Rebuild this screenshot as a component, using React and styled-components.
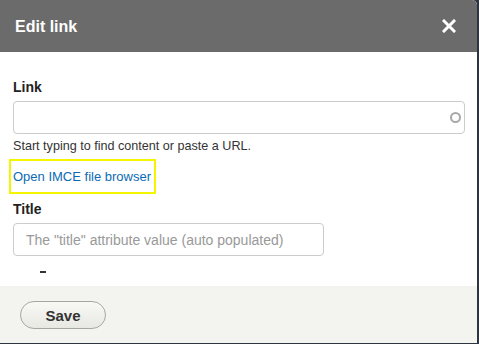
import React from 'react'
import styled, { createGlobalStyle } from 'styled-components'

const Global = createGlobalStyle`
  html, body {
    margin: 0;
    padding: 0;
    background: #2f3540;
    font-family: "Liberation Sans", Arial, sans-serif;
  }
`

const Dialog = styled.div`
  width: 477px;
  height: 343px;
  background: #fff;
  border-radius: 0 5px 0 0;
  overflow: hidden;
  display: flex;
  flex-direction: column;
`

const Header = styled.div`
  height: 52px;
  flex: none;
  background: #6b6b6b;
  display: flex;
  align-items: center;
  justify-content: space-between;
  padding: 0 21px 0 15px;
  box-sizing: border-box;
`

const Title = styled.h1`
  margin: 0;
  color: #fff;
  font-size: 16px;
  font-weight: bold;
  line-height: 20px;
  padding-top: 2px;
`

const Close = styled.button`
  border: 0;
  background: none;
  padding: 0;
  width: 14px;
  height: 14px;
  display: flex;
  cursor: pointer;
`

const Body = styled.div`
  height: 234px;
  flex: none;
  overflow: hidden;
  padding: 26px 12px 0 13px;
  box-sizing: border-box;
`

const Label = styled.label`
  display: block;
  font-size: 14px;
  font-weight: bold;
  line-height: 18px;
  color: #222;
  margin-top: ${(p) => p.$top || 0}px;
`

const InputWrap = styled.div`
  position: relative;
  width: ${(p) => p.$width}px;
  margin-top: 5px;
`

const Input = styled.input`
  display: block;
  width: 100%;
  height: 33px;
  box-sizing: border-box;
  border: 1px solid #ccc;
  border-radius: 4px;
  padding: 0 12px;
  font-family: inherit;
  font-size: 14px;
  color: #333;
  outline: none;

  &::placeholder {
    color: #999;
  }
`

const Throbber = styled.span`
  position: absolute;
  right: 4px;
  top: 11px;
  width: 7px;
  height: 7px;
  border: 2px solid #a8a8a8;
  border-radius: 50%;
`

const Description = styled.div`
  font-size: 12.6px;
  line-height: 16px;
  color: #333;
  margin-top: 4px;
`

const Highlight = styled.div`
  display: flex;
  width: fit-content;
  margin: 5px 0 0 -4px;
  padding: 8px 3px 8px 2px;
  border: 2px solid #f5f500;
`

const BrowseLink = styled.a`
  font-size: 13px;
  line-height: 15px;
  color: #0b6ab3;
  text-decoration: none;
`

const Hint = styled.div`
  margin: 15px 0 0 27px;
  width: 6px;
  height: 2px;
  background: #333;
`

const Footer = styled.div`
  flex: 1;
  background: #f3f3ef;
  padding: 15px 20px;
  box-sizing: border-box;
`

const Button = styled.button`
  width: 86px;
  height: 28px;
  border: 1px solid #a6a6a6;
  border-radius: 14px;
  background: linear-gradient(#f8f8f5, #e8e8e3);
  font-family: inherit;
  font-size: 15px;
  font-weight: bold;
  color: #333;
  cursor: pointer;
`

export default function App() {
  return (
    <>
      <Global />
      <Dialog>
        <Header>
          <Title>Edit link</Title>
          <Close aria-label="Close">
            <svg width="14" height="14" viewBox="0 0 14 14">
              <path d="M2 2 L12 12 M12 2 L2 12" stroke="#fff" strokeWidth="3" strokeLinecap="square" />
            </svg>
          </Close>
        </Header>
        <Body>
          <Label>Link</Label>
          <InputWrap $width={452}>
            <Input type="text" />
            <Throbber />
          </InputWrap>
          <Description>Start typing to find content or paste a URL.</Description>
          <Highlight>
            <BrowseLink href="#">Open IMCE file browser</BrowseLink>
          </Highlight>
          <Label $top={6}>Title</Label>
          <InputWrap $width={311}>
            <Input type="text" placeholder={'The "title" attribute value (auto populated)'} />
          </InputWrap>
          <Hint />
        </Body>
        <Footer>
          <Button>Save</Button>
        </Footer>
      </Dialog>
    </>
  )
}
